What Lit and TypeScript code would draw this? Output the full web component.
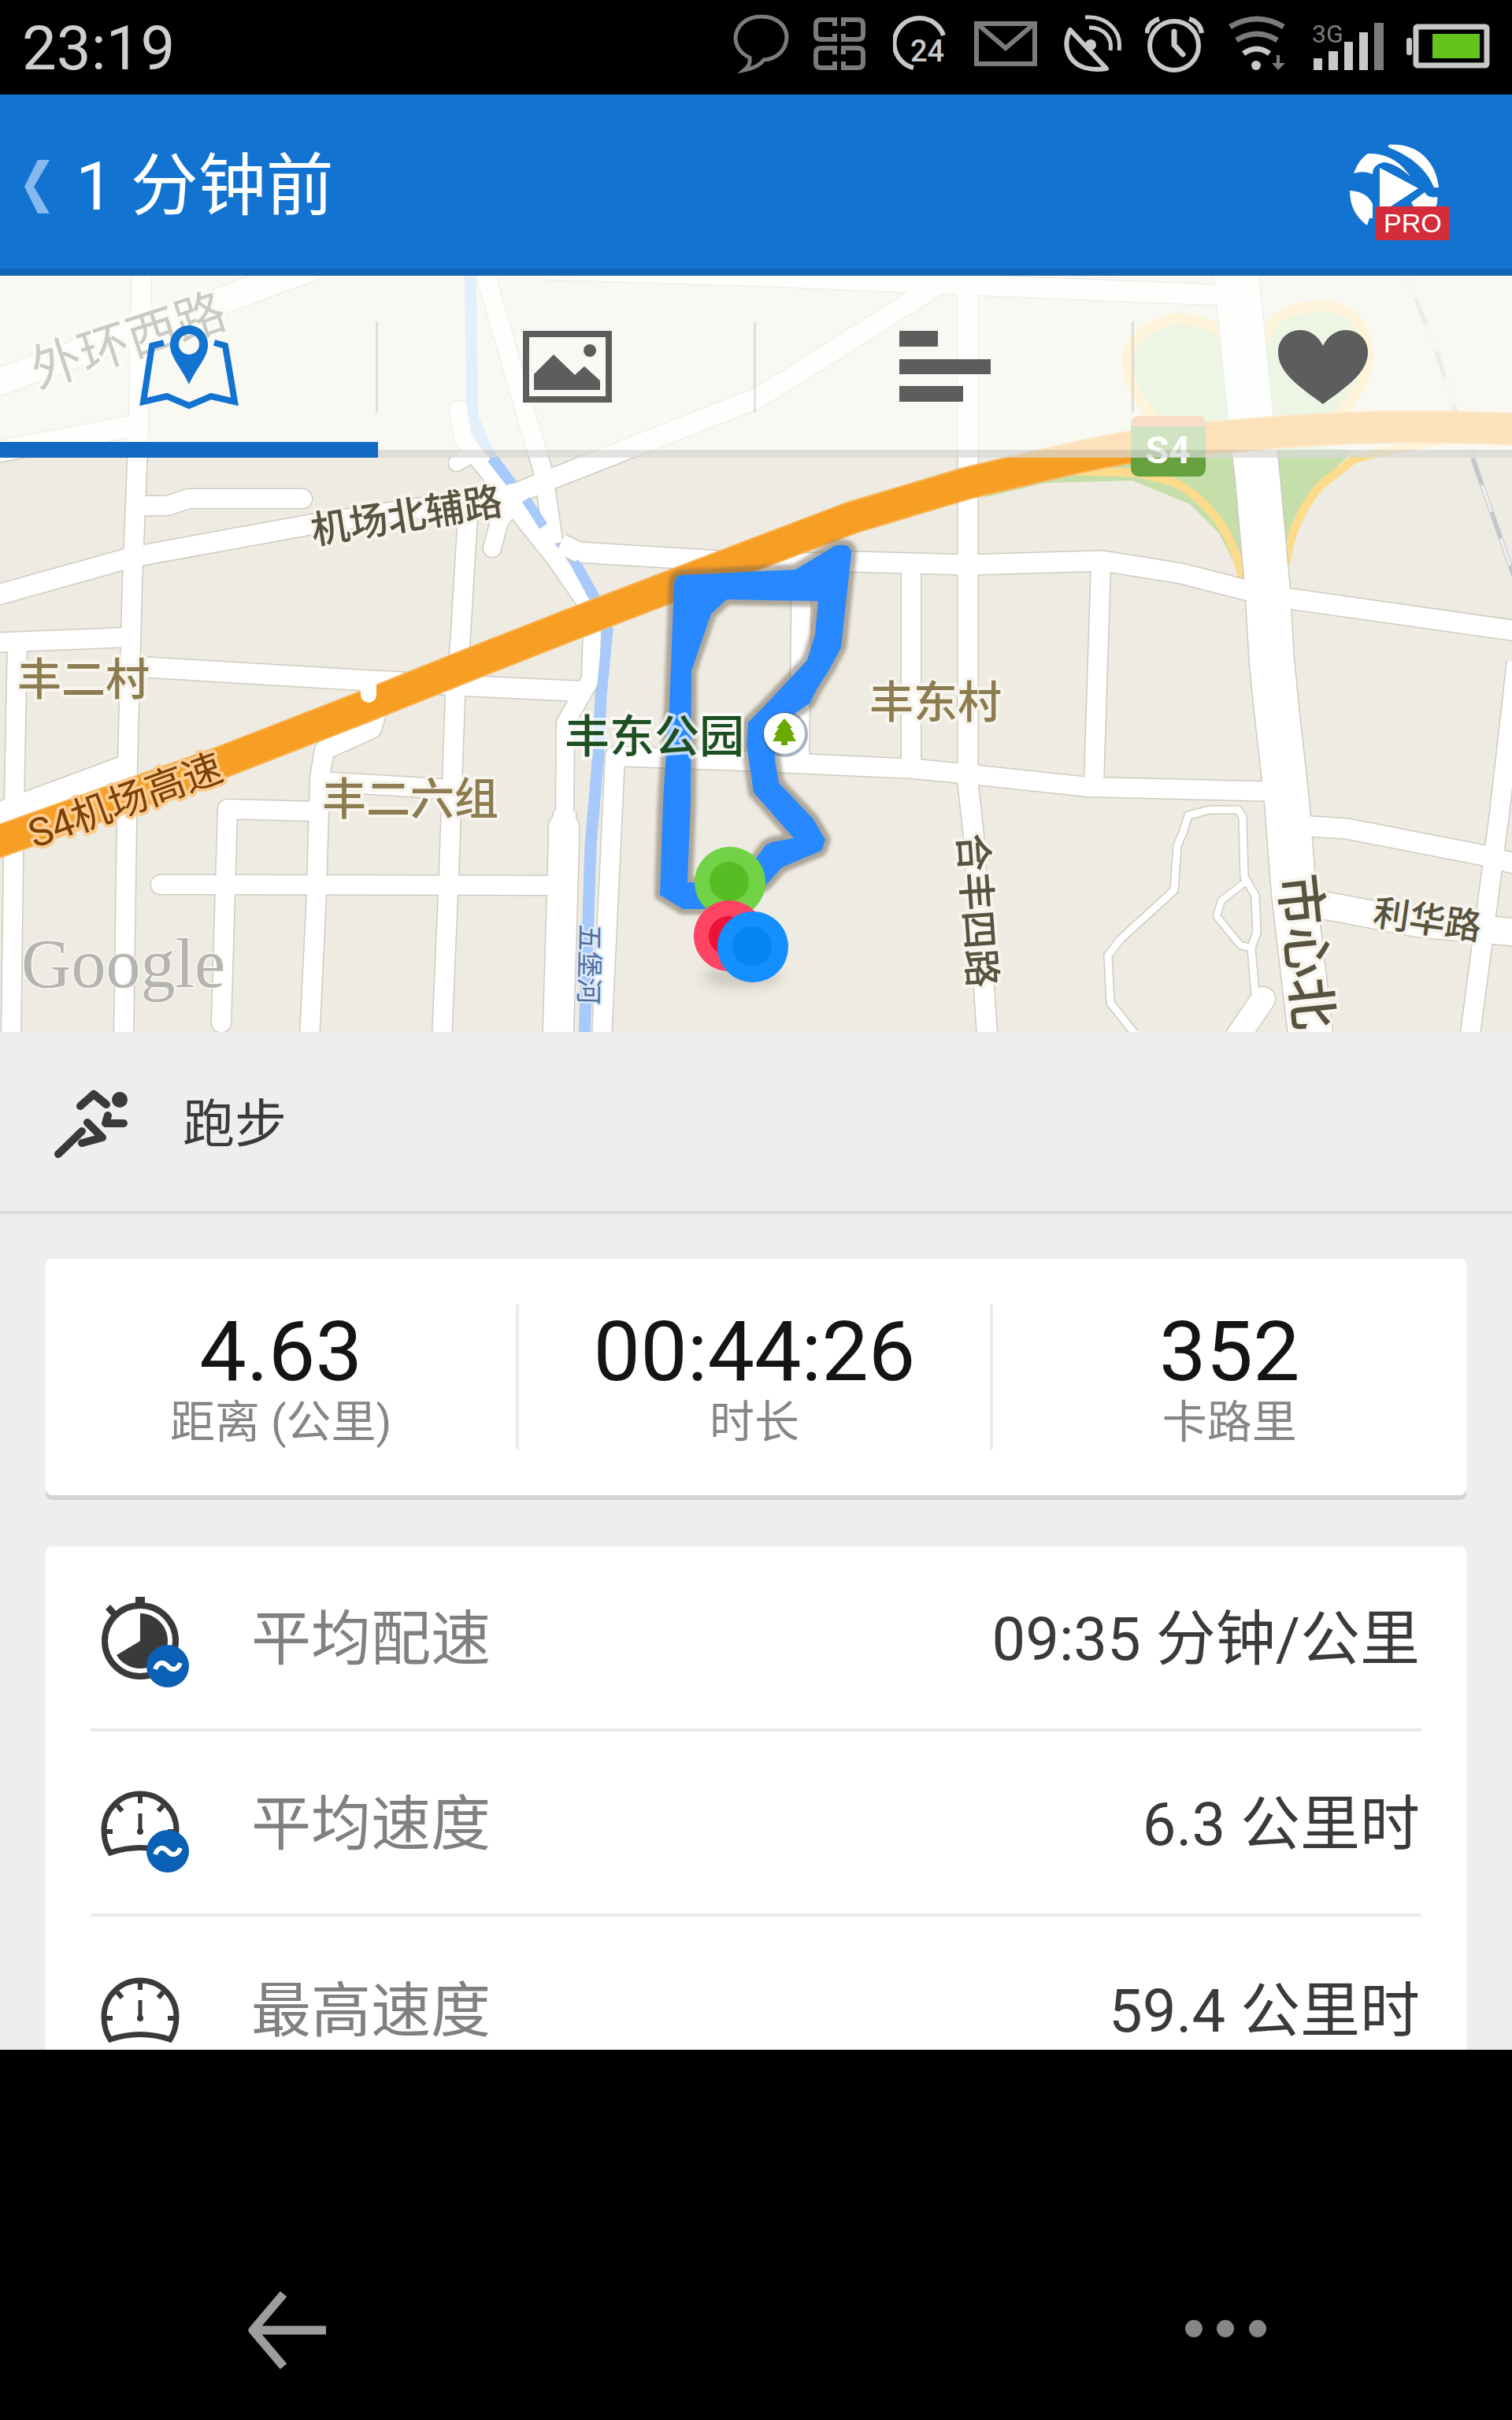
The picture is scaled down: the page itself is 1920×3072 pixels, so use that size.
import { LitElement, html, svg, css } from "lit";
import { customElement, property, state } from "lit/decorators.js";
import { classMap } from "lit/directives/class-map.js";

type Road = { d: string; w: number; round?: boolean };

const ROADS: Road[] = [
  { d: "M-10 488L362 352L400 338", w: 33 },
  { d: "M-10 575L172 540", w: 26 },
  { d: "M690 342L960 350L1240 362L1560 375", w: 25 },
  { d: "M180 340L176 540L168 740L162 970L157 1320", w: 24 },
  { d: "M-10 757L169 707L394 666L656 626L700 608L960 506L1000 482L1190 362", w: 25 },
  { d: "M176 642H212L240 633L384 633", w: 24, round: true },
  { d: "M614 340L672 540L690 600L703 690", w: 23 },
  { d: "M582 520L588 557L625 605L662 655L706 710L744 765L752 800L750 862L718 918L717 1040", w: 22, round: true },
  { d: "M580 588L600 576L625 604", w: 20, round: true },
  { d: "M625 696L634 662L654 634", w: 22, round: true },
  { d: "M594 655L584 820L578 883L570 1110L561 1320", w: 24 },
  { d: "M712 690L735 701L980 716L1082 713L1230 717L1400 712L1500 728L1609 756L1920 800L1930 803", w: 25 },
  { d: "M-10 816L162 809", w: 24 },
  { d: "M22 815L18 1017L14 1320", w: 24 },
  { d: "M168 846L453 863L600 871L748 878", w: 25 },
  { d: "M-10 1036L162 972", w: 28 },
  { d: "M478 905L472 925L412 952L406 987L402 1133L393 1320", w: 24 },
  { d: "M281 1298L289 1027L402 1030", w: 24, round: true },
  { d: "M406 992L572 1002", w: 24 },
  { d: "M204 1123L706 1124", w: 24, round: true },
  { d: "M717 1030L716 1090", w: 28 },
  { d: "M716 1050L716 1067L708 1340", w: 38, round: true },
  { d: "M764 1320L781 960L944 966L1162 976L1242 984L1382 999L1630 1005", w: 24 },
  { d: "M1018 720L1015 965", w: 24 },
  { d: "M1157 720V974", w: 24 },
  { d: "M1229 360V993L1236 1057L1254 1320", w: 25 },
  { d: "M1398 715L1389 995", w: 24 },
  { d: "M1648 1048L1710 1052L1885 1086L1930 1098", w: 25 },
  { d: "M1660 1145L1800 1172L1930 1184", w: 34 },
  { d: "M1926 840L1904 1033L1866 1320", w: 24 },
  { d: "M1441 1312L1410 1273L1407 1213L1422 1193L1491 1130L1495 1073L1502 1057L1509 1035L1536 1028H1572L1578 1037L1580 1113L1594 1137L1596 1183L1589 1203L1594 1262", w: 9 },
  { d: "M1581 1120L1551 1143L1545 1163L1575 1200L1589 1203", w: 8 },
  { d: "M1604 1268L1562 1330", w: 30, round: true },
  { d: "M1569 340L1588 527L1597 607L1609 740L1615 840L1621 900L1634 1017L1643 1133L1665 1320", w: 56 },
];

const ROUTE =
  "M856 742Q857 730 866 730L1010 723L1060 693Q1082 688 1081 704L1077 739L1068 822L1053 850L1037 875L1028 893L1010 905L985 945L984 964L989 994L1033 1040L1048 1066L1043 1080L993 1101L973 1123L940 1142L893 1154H867L838 1136L842 1016L850 897Z" +
  "M923 761L903 779L878 852L877 1016L873 1120L925 1122L960 1090L972 1073L980 1069L1008 1064L957 1006L948 945L950 917L970 897L1025 838L1035 806L1039 763Z";

const RIVER = "M597 340L600 530L620 575L648 613L690 668L730 715L758 765L771 800L763 883L760 957L750 1073L742 1320";
const MOTORWAY = "M-10 1071L275 970L463 897L600 842L725 793L960 703L1082 657L1229 613L1340 587Q1440 562 1572 553Q1740 536 1930 545";

@customElement("route-map")
export class RouteMap extends LitElement {
  static styles = css`
    :host { display: block; }
    .map { display: block; width: 100%; height: auto; background: #eeebe2; }
    .label { font-family: "Noto Sans CJK SC", sans-serif; paint-order: stroke; stroke: #f6f4ec; stroke-width: 8; stroke-linejoin: round; fill: #58533f; }
    .place { font-size: 56px; fill: #8c7c50; font-weight: 500; }
    .park { font-size: 57px; font-weight: 500; fill: #1d4f22; stroke: #ffffff; stroke-opacity: 0.7; }
    .road { font-size: 49px; font-weight: 500; }
    .street { font-size: 46px; font-weight: 500; }
    .ring { font-size: 64px; }
    .avenue { font-size: 66px; font-weight: 500; }
    .river { font-size: 34px; fill: #4f6f9f; stroke: #dde9fb; stroke-width: 5; }
    .motorway { font-family: Roboto, "Noto Sans CJK SC", sans-serif; font-size: 50px; fill: #7c3f04; stroke: #fccb8e; }
    .shield { font-family: Roboto, sans-serif; font-size: 48px; font-weight: 700; fill: #ffffff; text-anchor: middle; }
    .google { font-family: "Liberation Serif", serif; font-size: 88px; fill: #b5b4b0; paint-order: stroke; stroke: #f8f7f4; stroke-width: 3; }
  `;

  render() {
    const cap = (r: Road) => (r.round ? "round" : "butt");
    return html`<svg class="map" viewBox="0 350 1920 960" role="img" aria-label="路线地图">
      <defs>
        <filter id="soft" x="-50%" y="-100%" width="200%" height="300%"><feGaussianBlur stdDeviation="8" /></filter>
        <filter id="edge" x="-10%" y="-10%" width="120%" height="120%"><feGaussianBlur stdDeviation="2" /></filter>
      </defs>
      <g fill="#c5deaa">
        <path d="M1248 632L1327 613L1438 610L1511 640L1548 677L1575 730L1600 700V540L1340 580Z" />
        <path d="M1600 560L1720 572L1664 623L1640 670L1620 720Z" />
        <path d="M1474 538Q1431 490 1431 455Q1440 410 1500 405Q1530 405 1560 425V540Z" />
        <path d="M1600 440Q1620 388 1676 388Q1738 395 1738 457Q1725 510 1684 538H1600Z" />
      </g>
      <g fill="none" stroke="#fddb8d" stroke-width="14">
        <path d="M1360 598L1444 600L1493 613Q1560 650 1578 735" stroke-width="11" />
        <path d="M1633 715Q1640 660 1676 617L1719 583L1756 573L1830 560" stroke-width="11" />
        <path d="M1474 538Q1431 500 1431 455Q1445 410 1499 404Q1530 406 1560 428" />
        <path d="M1604 430Q1620 390 1676 388Q1735 388 1738 457Q1730 505 1684 538" />
      </g>
      <path d="M1784 345L1823 443L1848 520L1872 587L1922 730" fill="none" stroke="#c4c6ca" stroke-width="6" />
      <path d="M1784 345L1823 443L1848 520L1872 587L1922 730" fill="none" stroke="#eeeeee" stroke-width="4" stroke-dasharray="36 36" />
      <path d=${RIVER} fill="none" stroke="#a7c9fb" stroke-width="15" />
      ${ROADS.map((r) => svg`<path d=${r.d} fill="none" stroke="#cfcbc0" stroke-width=${r.w + 3} stroke-linecap=${cap(r)} stroke-linejoin="round" />`)}
      ${ROADS.map((r) => svg`<path d=${r.d} fill="none" stroke="#ffffff" stroke-width=${r.w} stroke-linecap=${cap(r)} stroke-linejoin="round" />`)}
      <path d="M624 582L648 613M668 634L690 668M729 713L757 765M771 790L771 800L763 883L760 957L750 1073L742 1320" fill="none" stroke="#a7c9fb" stroke-width="12" />
      <path d=${MOTORWAY} fill="none" stroke="#f9b45a" stroke-width="42" />
      <path d=${MOTORWAY} fill="none" stroke="#f79e24" stroke-width="38" />
      <path d="M468 862V882" stroke="#ffffff" stroke-width="20" stroke-linecap="round" />
      <rect x="1436" y="528" width="95" height="77" rx="10" fill="#67a13f" />
      <path d="M1436 541V538Q1436 528 1446 528H1521Q1531 528 1531 538V541Z" fill="#ec8f50" />
      <text class="shield" x="1483" y="588">S4</text>

      <path d=${ROUTE} fill="none" stroke="#6b5f50" stroke-opacity="0.5" stroke-width="14" stroke-linejoin="round" filter="url(#edge)" />
      <path d=${ROUTE} fill="#2888ff" fill-rule="evenodd" />

      <text class="label ring" transform="translate(48 493) rotate(-18)">外环西路</text>
      <text class="label road" transform="translate(398 691) rotate(-9)">机场北辅路</text>
      <text class="label place" x="22" y="882">丰二村</text>
      <text class="label place" x="409" y="1034">丰二六组</text>
      <text class="label place" x="1104" y="911">丰东村</text>
      <text class="label park" x="717" y="955">丰东公园</text>
      <text class="label motorway" transform="translate(44 1077) rotate(-20)">S4机场高速</text>
      <text class="label road" transform="translate(1217 1059) rotate(86)">合丰四路</text>
      <text class="label river" transform="translate(737 1173) rotate(91)">五堡河</text>
      <text class="label avenue" transform="translate(1625 1112) rotate(84)">市心北</text>
      <text class="label street" transform="translate(1742 1174) rotate(8)">利华路</text>
      <text class="google" x="27" y="1253">Google</text>

      <circle cx="997" cy="932" r="29" fill="#3d5878" fill-opacity="0.45" />
      <circle cx="996" cy="931" r="26" fill="#ffffff" />
      <path d="M996 912L1006 924H1003L1009 933H1006L1011 941H1000V946H992V941H981L986 933H983L989 924H986Z" fill="#6aaa00" />
      <ellipse cx="942" cy="1240" rx="50" ry="12" fill="#000000" fill-opacity="0.16" filter="url(#soft)" />
      <circle cx="927" cy="1120" r="45" fill="#70d244" /><circle cx="926" cy="1119" r="25" fill="#57bd25" />
      <circle cx="926" cy="1188" r="45" fill="#ff4563" /><circle cx="925" cy="1188" r="25" fill="#ee1238" />
      <circle cx="956" cy="1202" r="45" fill="#138fff" /><circle cx="955" cy="1201" r="25" fill="#0485f2" />
    </svg>`;
  }
}

const averageBadge = svg`<circle cx="88" cy="96" r="27" fill="#0a60b4" />
  <path d="M72 100C76 90 83 90 88 96C93 102 100 102 104 92" fill="none" stroke="#ffffff" stroke-width="6" />`;

const stopwatch = svg`<circle cx="53" cy="64" r="45" fill="none" stroke="#3a3a3a" stroke-width="8" />
  <path d="M47 8H59V20H47ZM9 24L15 18L25 29L19 35Z" fill="#3a3a3a" />
  <path d="M53 64V29A35 35 0 1 1 23 82Z" fill="#3a3a3a" />`;

const gauge = svg`<path d="M15 98Q7 86 7 69A46 46 0 0 1 99 69Q99 86 91 98Q53 85 15 98Z" fill="none" stroke="#3a3a3a" stroke-width="7" />
  <path d="M53 23V35M24 38L30 45M82 38L76 45M8 71H18M98 71H88" stroke="#3a3a3a" stroke-width="6" />
  <path d="M53 48V71" stroke="#3a3a3a" stroke-width="5" /><circle cx="53" cy="71" r="4" fill="#3a3a3a" />`;

@customElement("metric-icon")
export class MetricIcon extends LitElement {
  @property() kind = "gauge";
  @property({ type: Boolean }) average = false;
  static styles = css`
    :host { display: block; }
    .icon { display: block; width: 120px; height: 128px; }
  `;
  render() {
    return html`<svg class="icon" viewBox="0 -4 120 128" aria-hidden="true">
      ${this.kind === "stopwatch" ? stopwatch : gauge}${this.average ? averageBadge : null}
    </svg>`;
  }
}

const STATUS_ICONS = [
  { w: 74, art: svg`<path d="M22 73C10 68 4 58 4 48C5 32 18 21 37 21C56 21 69 32 69 48C68 64 56 75 40 76C34 84 26 87 15 89C21 84 23 80 22 73Z" fill="none" stroke="#7b7b7b" stroke-width="5" />` },
  { w: 74, art: svg`<g fill="none" stroke="#7b7b7b" stroke-width="6"><path d="M28 33V25H11Q4 25 4 31V44Q4 50 11 50H28V43" /><path d="M39 33V25H57Q64 25 64 31V44Q64 50 57 50H39V43" /><path d="M28 69V61H11Q4 61 4 67V80Q4 86 11 86H28V78" /><path d="M39 69V61H57Q64 61 64 67V80Q64 86 57 86H39V78" /></g>` },
  { w: 74, art: svg`<path d="M64 45A32 32 0 1 0 26 86" fill="none" stroke="#c8c8c8" stroke-width="6" /><text class="badge" x="22" y="78">24</text>` },
  { w: 84, art: svg`<path d="M4 30H78V81H4Z M7 32L41 61L75 32" fill="none" stroke="#7b7b7b" stroke-width="6" />` },
  { w: 78, art: svg`<g fill="none" stroke="#c8c8c8" stroke-width="5"><path d="M11 38C-2 62 12 94 57 87Z" stroke-width="6" stroke-linejoin="round" /><path d="M30 22C56 20 77 38 73 64" /><path d="M35 35C54 35 65 48 62 64" /></g><circle cx="37" cy="57" r="7" fill="#c8c8c8" />` },
  { w: 78, art: svg`<g fill="none" stroke="#c8c8c8" stroke-width="6"><circle cx="37" cy="58" r="31" /><path d="M37 40V57L48 69" stroke-width="7" stroke-linecap="round" /><path d="M2 42Q4 28 18 24" /><path d="M72 42Q70 28 56 24" /></g>` },
  { w: 78, art: svg`<g fill="none" stroke-width="7"><path d="M2 34Q36 14 70 34" stroke="#7b7b7b" /><path d="M10 51Q36 35 62 51" stroke="#7b7b7b" /><path d="M19 68Q36 56 52 68" stroke="#c8c8c8" /></g><circle cx="35" cy="83" r="6" fill="#c8c8c8" /><path d="M61 70V80H55L63 89L72 80H65V70Z" fill="#7b7b7b" />` },
  { w: 92, art: svg`<text class="net" x="0" y="54">3G</text><path d="M2 74H13V89H2ZM21 65H33V89H21ZM41 53H52V89H41ZM60 41H71V89H60Z" fill="#c8c8c8" /><path d="M79 29H91V89H79Z" fill="#7b7b7b" />` },
  { w: 106, art: svg`<rect x="0" y="48" width="7" height="22" rx="3" fill="#c8c8c8" /><rect x="12" y="34" width="90" height="49" rx="2" fill="none" stroke="#c8c8c8" stroke-width="7" /><rect x="33" y="43" width="60" height="31" fill="#65c31d" />` },
];

const TABS = [
  { name: "地图", art: svg`<path d="M34 27L19 31L8 102L38 95L66 107L94 95L124 102L112 31L98 27" fill="none" stroke="#1373d1" stroke-width="8" /><path d="M66 5A24 24 0 0 1 90 30C90 46 76 58 66 80C56 58 42 46 42 30A24 24 0 0 1 66 5ZM66 16A13 13 0 1 0 66 42A13 13 0 1 0 66 16Z" fill="#1373d1" fill-rule="evenodd" />` },
  { name: "照片", art: svg`<path d="M14 16H119V99H14Z" fill="none" stroke="#5d5d5d" stroke-width="8" /><path d="M24 87V67L49 42L76 68L88 57L108 75V87Z" fill="#5d5d5d" /><circle cx="95" cy="37" r="8" fill="#5d5d5d" />` },
  { name: "分段", art: svg`<path d="M8 12H57V32H8ZM8 48H124V67H8ZM8 82H89V102H8Z" fill="#5d5d5d" />` },
  { name: "心率", art: svg`<path d="M66 105C38 84 9 66 9 39C9 22 22 11 37 11C49 11 60 18 66 31C72 18 83 11 95 11C110 11 123 22 123 39C123 66 94 84 66 105Z" fill="#5d5d5d" />` },
];

const STATS = [
  { value: "4.63", label: "距离 (公里)" },
  { value: "00:44:26", label: "时长" },
  { value: "352", label: "卡路里" },
];

const METRICS = [
  { label: "平均配速", value: "09:35 分钟/公里", kind: "stopwatch", average: true },
  { label: "平均速度", value: "6.3 公里时", kind: "gauge", average: true },
  { label: "最高速度", value: "59.4 公里时", kind: "gauge", average: false },
];

@customElement("app-root")
export class AppRoot extends LitElement {
  @state() private tab = 0;

  static styles = css`
    :host { display: flex; flex-direction: column; height: 100vh; overflow: hidden; background: #000000; font-family: Roboto, "Noto Sans CJK SC", sans-serif; color: #3a3a3a; }
    * { box-sizing: border-box; }
    button { border: 0; padding: 0; margin: 0; background: none; font: inherit; color: inherit; cursor: pointer; }
    svg { display: block; flex: none; }
    h1, h2, dl, dd, dt { margin: 0; font-weight: 400; }

    .status { flex: none; height: 120px; padding: 0 28px; display: flex; align-items: center; justify-content: space-between; color: #cfcfcf; }
    .clock { padding-top: 4px; font-size: 78px; line-height: 116px; }
    .tray { display: flex; gap: 28px; }
    .badge { font-family: Roboto, sans-serif; font-size: 38px; font-weight: 500; fill: #c8c8c8; }
    .net { font-family: Roboto, sans-serif; font-size: 32px; fill: #7b7b7b; }

    .header { flex: none; height: 230px; padding: 0 64px 0 30px; display: flex; align-items: center; justify-content: space-between; background: #1373d1; border-bottom: 9px solid #1263b6; color: #ffffff; }
    .back { padding-top: 12px; display: flex; align-items: center; gap: 30px; color: inherit; text-decoration: none; }
    .title { font-size: 86px; line-height: 120px; }
    .pro { font-family: "Liberation Sans", sans-serif; font-size: 34px; fill: #ffffff; }

    .content { flex: 1 1 0; min-height: 0; overflow-y: auto; scrollbar-width: none; background: #eeeeee; }
    .hero { display: grid; overflow: hidden; }
    .hero > * { grid-area: 1 / 1; }
    .tabs { align-self: start; z-index: 1; display: grid; grid-template-columns: repeat(4, 1fr); background: rgba(254, 255, 252, 0.7); }
    .tab { height: 231px; display: flex; align-items: center; justify-content: center; border-bottom: 10px solid rgba(0, 0, 0, 0.11); padding-top: 10px; background: linear-gradient(rgba(0, 0, 0, 0.1), rgba(0, 0, 0, 0.1)) right 58px / 3px 116px no-repeat; background-origin: border-box; }
    .tab:last-child { background: none; }
    .tab.active { border-bottom: 20px solid #1269c3; padding-top: 20px; }

    .activity { height: 231px; padding: 0 64px; display: flex; align-items: center; gap: 64px; border-bottom: 4px solid #dcdcdc; }
    .sport { padding-top: 8px; font-size: 66px; line-height: 96px; }

    .card { margin: 0 58px; background: #ffffff; border-radius: 8px; box-shadow: 0 6px 0 #d3d3d3; }
    .stats { margin-top: 57px; padding: 58px 0; display: grid; grid-template-columns: repeat(3, 1fr); }
    .stat { height: 184px; padding-top: 2px; display: flex; flex-direction: column-reverse; align-items: center; justify-content: flex-end; border-right: 4px solid #ebebeb; }
    .stat:last-child { border-right: 0; }
    .figure { font-size: 106px; line-height: 116px; color: #141414; }
    .caption { font-size: 57px; line-height: 64px; color: #868686; }

    .metrics { margin-top: 65px; padding: 0 57px; }
    .metric { height: 235px; padding: 0 2px 0 10px; display: flex; align-items: center; border-bottom: 4px solid #ebebeb; font-size: 76px; line-height: 100px; }
    .metric:last-child { border-bottom: 0; }
    .name { flex: 1; padding: 4px 0 0 74px; color: #808080; }
    .reading { padding-top: 4px; }

    .nav { flex: none; height: 470px; padding: 0 304px 54px; display: flex; align-items: flex-end; justify-content: space-between; background: #000000; }
  `;

  render() {
    return html`
      <div class="status">
        <time class="clock">23:19</time>
        <div class="tray">
          ${STATUS_ICONS.map((i) => html`<svg width=${i.w} height="120" viewBox="0 0 ${i.w} 120" aria-hidden="true">${i.art}</svg>`)}
        </div>
      </div>

      <header class="header">
        <a class="back" href="#back">
          <svg width="36" height="72" viewBox="0 0 36 72" aria-hidden="true"><path d="M18 2H33L13 36L33 70H18L1 36Z" fill="#86b9ee" /></svg>
          <h1 class="title">1 分钟前</h1>
        </a>
        <button aria-label="PRO">
          <svg width="144" height="150" viewBox="1713 156 144 150">
            <g fill="#ffffff">
              <path d="M1764 184C1795 180 1824 200 1828 238H1822C1812 214 1792 198 1764 187Z" />
              <path d="M1720 220C1724 209 1730 200 1738 195C1764 194 1780 207 1792 224C1780 213 1768 207 1758 206C1749 208 1744 213 1744 221Q1733 216 1720 220Z" />
              <path d="M1753 213L1802 239L1764 264H1753Z" />
              <path d="M1715 242Q1737 243 1744 259V277H1740L1737 286Q1715 270 1715 242Z" />
              <path d="M1810 244Q1814 252 1826 250Q1827 257 1824 264H1797L1793 257Z" />
            </g>
            <rect x="1748" y="262" width="94" height="43" rx="3" fill="#d32c3b" />
            <text class="pro" x="1758" y="295">PRO</text>
          </svg>
        </button>
      </header>

      <main class="content">
        <section class="hero">
          <route-map></route-map>
          <div class="tabs" role="tablist">
            ${TABS.map((t, i) => html`<button class=${classMap({ tab: true, active: this.tab === i })} role="tab" aria-label=${t.name}
              aria-selected=${this.tab === i ? "true" : "false"} @click=${() => (this.tab = i)}>
              <svg width="132" height="116" viewBox="0 0 132 116">${t.art}</svg>
            </button>`)}
          </div>
        </section>

        <section class="activity">
          <svg width="104" height="96" viewBox="64 1376 104 96" aria-hidden="true">
            <circle cx="152" cy="1396" r="10" fill="#3a3a3a" />
            <path d="M102 1404L119 1389L135 1402" fill="none" stroke="#3a3a3a" stroke-width="10" stroke-linecap="round" stroke-linejoin="round" />
            <path d="M137 1416L134 1426H157" fill="none" stroke="#3a3a3a" stroke-width="10" stroke-linecap="round" stroke-linejoin="round" />
            <path d="M111 1425L130 1444L104 1451" fill="none" stroke="#3a3a3a" stroke-width="10" stroke-linecap="round" stroke-linejoin="round" />
            <path d="M104 1436L74 1465" fill="none" stroke="#3a3a3a" stroke-width="10" stroke-linecap="round" />
          </svg>
          <h2 class="sport">跑步</h2>
        </section>

        <dl class="card stats">
          ${STATS.map((s) => html`<div class="stat"><dt class="caption">${s.label}</dt><dd class="figure">${s.value}</dd></div>`)}
        </dl>

        <dl class="card metrics">
          ${METRICS.map((m) => html`<div class="metric">
            <metric-icon kind=${m.kind} ?average=${m.average}></metric-icon>
            <dt class="name">${m.label}</dt><dd class="reading">${m.value}</dd>
          </div>`)}
        </dl>
      </main>

      <nav class="nav">
        <button aria-label="返回">
          <svg width="120" height="120" viewBox="0 0 120 120"><path d="M56 14L17 60L56 106M17 60H110" fill="none" stroke="#9d9d9d" stroke-width="11" stroke-linejoin="round" /></svg>
        </button>
        <button aria-label="更多">
          <svg width="120" height="120" viewBox="0 0 120 120"><g fill="#868686"><circle cx="20" cy="58" r="11" /><circle cx="60" cy="58" r="11" /><circle cx="101" cy="58" r="11" /></g></svg>
        </button>
      </nav>
    `;
  }
}
